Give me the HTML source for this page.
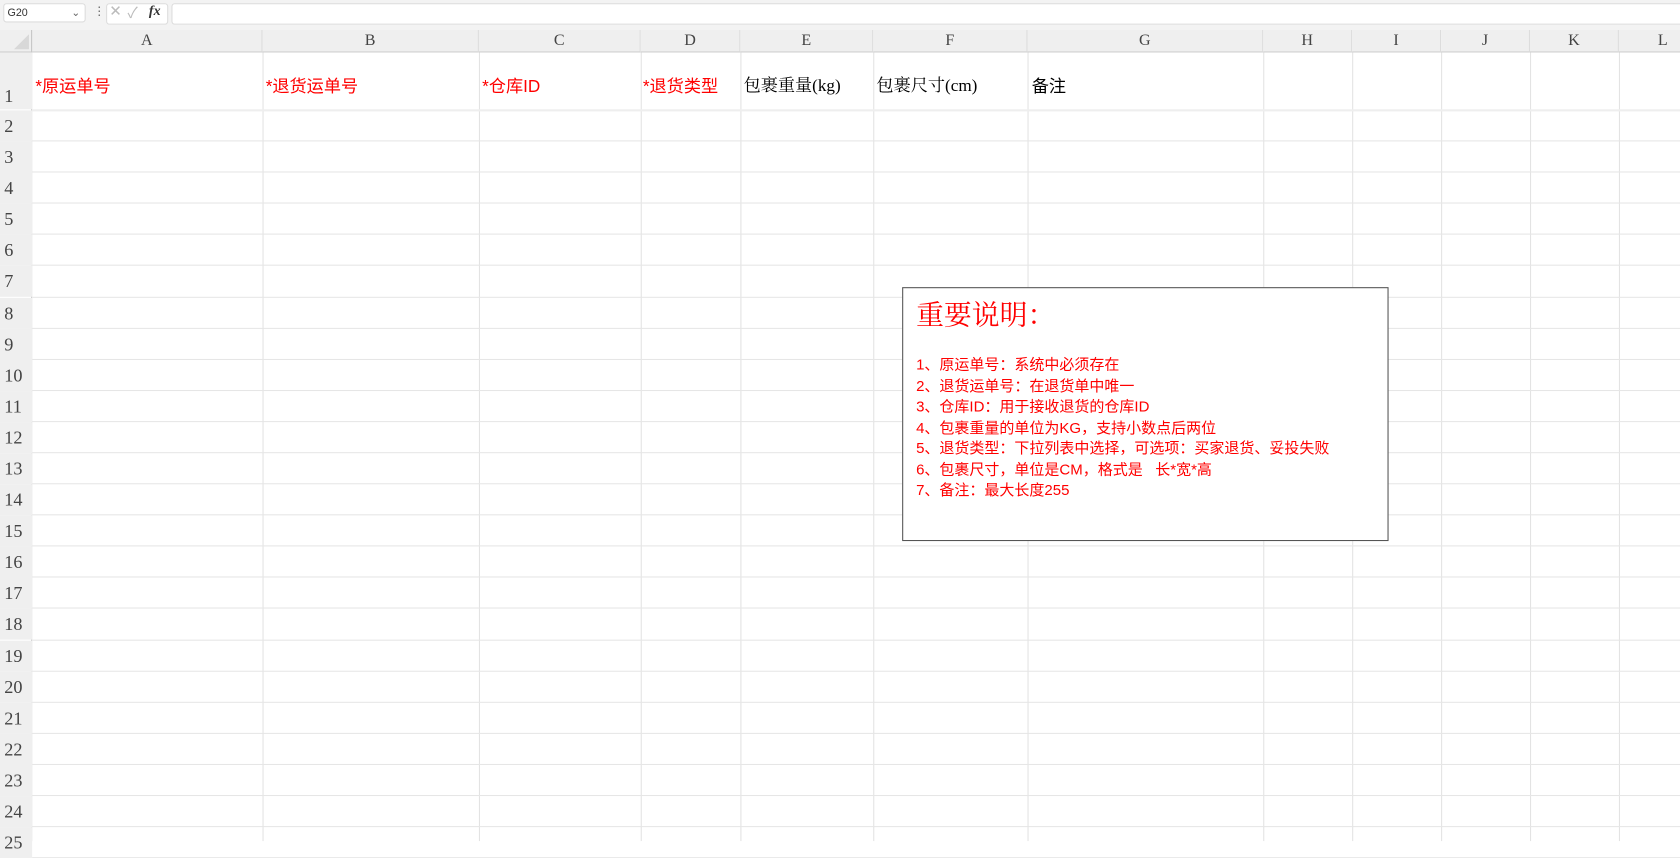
<!DOCTYPE html>
<html><head><meta charset="utf-8"><style>
html,body{margin:0;padding:0;width:1680px;height:841px;overflow:hidden;background:#fff}
#s{position:absolute;left:0;top:0;width:1568px;height:785px;transform:scale(1.071429);transform-origin:0 0;font-family:"Liberation Sans","Noto Sans CJK SC",sans-serif}
.a{position:absolute}
.tb{background:#f3f3f3}
.box{background:#fff;border:1px solid #ddd;border-radius:3px}
.ch{position:absolute;top:28px;height:21px;background:#efefef;border-right:1px solid #dcdcdc;border-bottom:1px solid #cfcfcf;box-sizing:border-box;text-align:center;font:15px/21px "Liberation Serif",serif;color:#444}
.vl{position:absolute;top:49px;width:1px;height:736px;background:#e3e3e3}
.hl{position:absolute;left:30px;height:1px;width:1538px;background:#e6e6e6}
.rn{position:absolute;left:0;width:30px;background:#efefef;font:17px "Liberation Serif",serif;color:#444;padding-left:4px;box-sizing:border-box}
.h1{position:absolute;top:67px;font-size:16px;white-space:nowrap}
.r{color:#f00}
</style></head><body><div id="s">
<div class="a tb" style="left:0;top:0;width:1568px;height:28px"></div>
<div class="a box" style="left:3px;top:3px;width:77px;height:18px;font-size:10px;line-height:18px;padding-left:3px;box-sizing:border-box;color:#333">G20<span style="position:absolute;right:4px;top:0;color:#666">⌄</span></div>
<div class="a" style="left:87px;top:4px;font-size:11px;color:#666">⋮</div>
<div class="a box" style="left:99px;top:3px;width:56px;height:18px"></div>
<div class="a" style="left:102px;top:2px;font-size:14px;color:#bbb">✕</div>
<div class="a" style="left:119px;top:2px;font-size:14px;color:#bbb">✓</div>
<div class="a" style="left:139px;top:2px;font:italic bold 13px 'Liberation Serif',serif;color:#333">fx</div>
<div class="a box" style="left:160px;top:3px;width:1420px;height:18px"></div>
<div class="a" style="left:0;top:28px;width:30px;height:21px;background:#efefef;border-right:1px solid #cfcfcf;border-bottom:1px solid #cfcfcf;box-sizing:border-box"></div>
<svg class="a" style="left:8px;top:32px" width="20" height="15"><polygon points="19,0 19,14 5,14" fill="#d8d8d8"/></svg>
<div class="ch" style="left:30px;width:215px">A</div>
<div class="ch" style="left:245px;width:202px">B</div>
<div class="ch" style="left:447px;width:151px">C</div>
<div class="ch" style="left:598px;width:93px">D</div>
<div class="ch" style="left:691px;width:124px">E</div>
<div class="ch" style="left:815px;width:144px">F</div>
<div class="ch" style="left:959px;width:220px">G</div>
<div class="ch" style="left:1179px;width:83px">H</div>
<div class="ch" style="left:1262px;width:83px">I</div>
<div class="ch" style="left:1345px;width:83px">J</div>
<div class="ch" style="left:1428px;width:83px">K</div>
<div class="ch" style="left:1511px;width:83px">L</div>
<div class="vl" style="left:245px"></div><div class="vl" style="left:447px"></div><div class="vl" style="left:598px"></div><div class="vl" style="left:691px"></div><div class="vl" style="left:815px"></div><div class="vl" style="left:959px"></div><div class="vl" style="left:1179px"></div><div class="vl" style="left:1262px"></div><div class="vl" style="left:1345px"></div><div class="vl" style="left:1428px"></div><div class="vl" style="left:1511px"></div>
<div class="a" style="left:29px;top:28px;width:1px;height:757px;background:#c8c8c8"></div>
<div class="rn" style="top:49px;height:53px;padding-top:31px">1</div>
<div class="hl" style="top:102px;background:#eee;height:2px"></div>
<div id="rows"></div>
<script>
var h='';for(var i=2;i<=25;i++){var t=102+(i-2)*29.09;h+='<div class="rn" style="top:'+(t+1)+'px;height:29px;line-height:29px">'+i+'</div>';h+='<div class="hl" style="top:'+(t+29.09)+'px"></div>';}
document.getElementById('rows').outerHTML=h;
</script>
<div class="h1 r" style="left:33px">*原运单号</div>
<div class="h1 r" style="left:248px">*退货运单号</div>
<div class="h1 r" style="left:450px">*仓库ID</div>
<div class="h1 r" style="left:600px">*退货类型</div>
<div class="h1" style="left:694px;font-family:'Liberation Serif','Noto Serif CJK SC',serif">包裹重量(kg)</div>
<div class="h1" style="left:818px;font-family:'Liberation Serif','Noto Serif CJK SC',serif">包裹尺寸(cm)</div>
<div class="h1" style="left:963px">备注</div>
<div class="a" style="left:842px;top:268px;width:454px;height:237px;border:1px solid #555;box-sizing:border-box;background:#fff;color:#f00">
<div class="a" style="left:12px;top:8px;font:26px/36px 'Liberation Serif','Noto Serif CJK SC',serif;white-space:nowrap">重要说明：</div>
<div class="a" style="left:12px;top:62px;font-size:14px;line-height:19.5px;white-space:pre">1、原运单号：系统中必须存在
2、退货运单号：在退货单中唯一
3、仓库ID：用于接收退货的仓库ID
4、包裹重量的单位为KG，支持小数点后两位
5、退货类型：下拉列表中选择，可选项：买家退货、妥投失败
6、包裹尺寸，单位是CM，格式是   长*宽*高
7、备注：最大长度255</div>
</div>
</div></body></html>
